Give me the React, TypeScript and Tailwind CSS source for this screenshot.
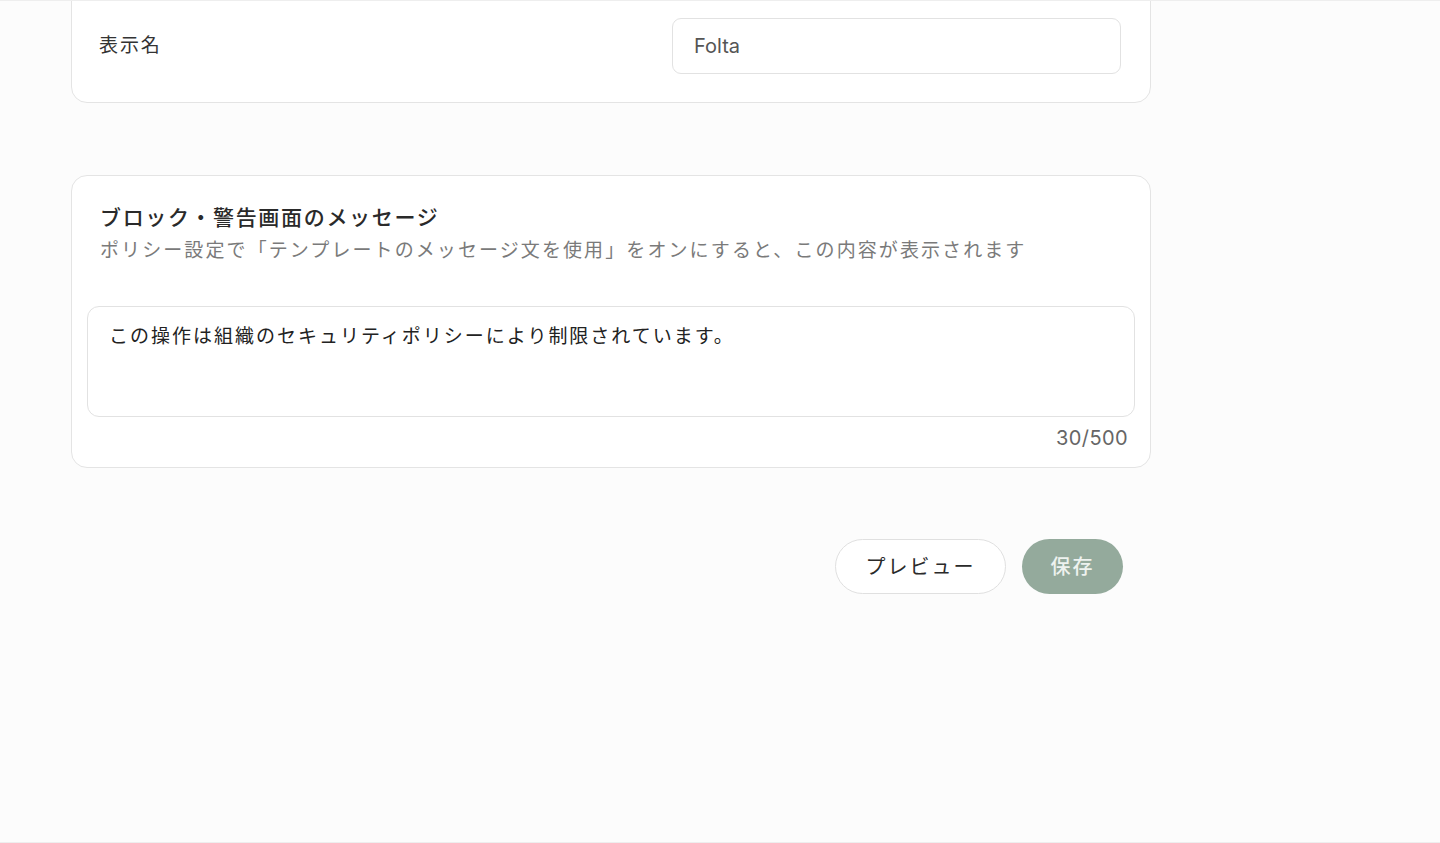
import React, { useState } from 'react';

const font = { fontFamily: 'Inter, "Noto Sans CJK JP", sans-serif' };

export default function App() {
  const [name, setName] = useState('Folta');
  const [message, setMessage] = useState('この操作は組織のセキュリティポリシーにより制限されています。');

  return (
    <div
      className="h-[843px] w-[1440px] overflow-hidden bg-[#fcfcfc] border-t border-b border-[#eeeeee]"
      style={font}
    >
      <div className="w-[1080px] ml-[71px] -mt-[22px] flex flex-col gap-[72px]">
        {/* Display name */}
        <div className="bg-white border border-[#e4e4e4] rounded-[16px] pl-[27px] pr-[29px] pt-[38px] pb-[28px] flex items-center justify-between">
          <label className="text-[19px] tracking-[0.1em] text-[#333333]">表示名</label>
          <input
            value={name}
            onChange={(e) => setName(e.target.value)}
            className="w-[449px] h-[56px] rounded-[9px] border border-[#e2e2e2] bg-white px-[21px] text-[20px] text-[#555555] outline-none"
          />
        </div>

        {/* Block / warning message */}
        <div className="bg-white border border-[#e4e4e4] rounded-[16px] px-[15px] pt-[26px] pb-[15px]">
          <div className="px-[13px]">
            <h2 className="text-[21px] leading-[32px] tracking-[0.08em] text-[#2a2a2a] font-medium">
              ブロック・警告画面のメッセージ
            </h2>
            <p className="text-[19px] leading-[34px] tracking-[0.11em] text-[#7a7a7a]">
              ポリシー設定で「テンプレートのメッセージ文を使用」をオンにすると、この内容が表示されます
            </p>
          </div>
          <textarea
            value={message}
            onChange={(e) => setMessage(e.target.value)}
            className="mt-[38px] block w-full h-[111px] resize-none rounded-[12px] border border-[#e2e2e2] bg-white px-[21px] py-[15px] text-[19px] leading-[30px] tracking-[0.105em] text-[#222222] outline-none"
          />
          <div className="mt-[7px] pr-[7px] text-right text-[20px] leading-[28px] tracking-[0.02em] text-[#666666]">
            {message.length}/500
          </div>
        </div>

        {/* Actions */}
        <div className="flex justify-end gap-[16px] pr-[28px] -mt-[1px]">
          <button className="h-[55px] w-[171px] rounded-full border border-[#e0e0e0] bg-white text-[20px] tracking-[0.1em] text-[#2a2a2a]">
            プレビュー
          </button>
          <button className="h-[55px] w-[101px] rounded-full bg-[#94aa9c] text-[20px] font-medium tracking-[0.1em] text-[#eef2ef]">
            保存
          </button>
        </div>
      </div>
    </div>
  );
}
